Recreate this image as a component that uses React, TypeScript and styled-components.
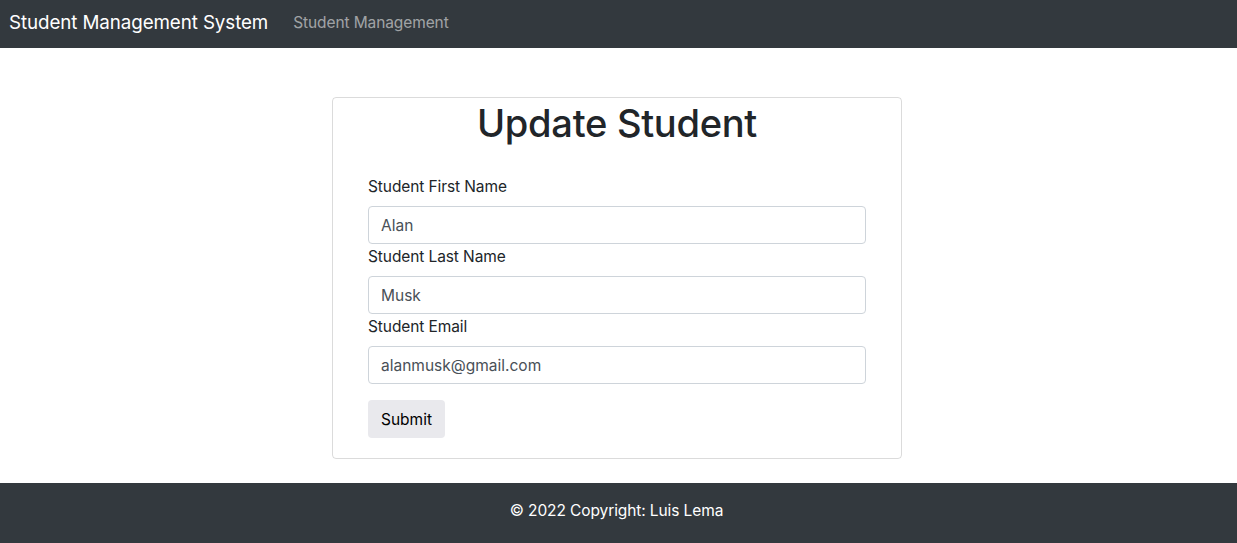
import React from "react";
import styled, { createGlobalStyle } from "styled-components";

const GlobalStyle = createGlobalStyle`
  * { box-sizing: border-box; }
  html, body { margin: 0; padding: 0; }
  body {
    font-family: Inter, "Liberation Sans", Arial, sans-serif;
    font-size: 16px;
    line-height: 1.5;
    color: #212529;
    background: #fff;
  }
`;

const Page = styled.div`
  min-height: 100vh;
  display: flex;
  flex-direction: column;
`;

const NavBar = styled.nav`
  height: 48px;
  background: #33393e;
  display: flex;
  align-items: center;
  padding: 0 9px 2px;
  gap: 25px;
`;

const Brand = styled.a`
  color: #fff;
  font-size: 18.8px;
  line-height: 30px;
  text-decoration: none;
  letter-spacing: -0.1px;
`;

const NavLink = styled.a`
  color: rgba(255, 255, 255, 0.55);
  font-size: 15.5px;
  text-decoration: none;
  letter-spacing: -0.1px;
`;

const Main = styled.main`
  flex: 1;
  padding-top: 49px;
  padding-bottom: 24px;
  display: flex;
  justify-content: center;
`;

const Card = styled.div`
  width: 570px;
  margin-left: -3px;
  border: 1px solid rgba(0, 0, 0, 0.14);
  border-radius: 4px;
  padding: 0 35px 20px;
  align-self: flex-start;
`;

const Title = styled.h1`
  margin: 0 0 27px;
  padding-top: 1px;
  font-size: 38.1px;
  line-height: 48px;
  font-weight: 500;
  text-align: center;
  letter-spacing: -0.3px;
`;

const Form = styled.form`
  display: flex;
  flex-direction: column;
`;

const Label = styled.label`
  display: block;
  margin-bottom: 8px;
  font-size: 15.5px;
  line-height: 24px;
  letter-spacing: -0.1px;
  transform: translateY(1px);
`;

const Input = styled.input`
  display: block;
  width: 100%;
  height: 38px;
  padding: 6px 12px;
  font-family: inherit;
  font-size: 15.5px;
  line-height: 24px;
  color: #495057;
  border: 1px solid #ced4da;
  border-radius: 4px;
  background: #fff;
  outline: none;
`;

const SubmitButton = styled.button`
  align-self: flex-start;
  margin-top: 16px;
  height: 38px;
  padding: 0 13px;
  font-family: inherit;
  font-size: 15.5px;
  color: #000;
  background: #e9e9ed;
  border: none;
  border-radius: 4px;
`;

const Footer = styled.footer`
  background: #33393e;
  color: #fff;
  text-align: center;
  padding: 16px 4px 20px 0;
  font-size: 15.5px;
  line-height: 24px;
  letter-spacing: -0.1px;
`;

const fields = [
  { label: "Student First Name", value: "Alan" },
  { label: "Student Last Name", value: "Musk" },
  { label: "Student Email", value: "alanmusk@gmail.com" },
];

export default function App() {
  return (
    <Page>
      <GlobalStyle />
      <NavBar>
        <Brand href="#">Student Management System</Brand>
        <NavLink href="#">Student Management</NavLink>
      </NavBar>
      <Main>
        <Card>
          <Title>Update Student</Title>
          <Form onSubmit={(e) => e.preventDefault()}>
            {fields.map((f) => (
              <div key={f.label}>
                <Label>{f.label}</Label>
                <Input defaultValue={f.value} />
              </div>
            ))}
            <SubmitButton type="submit">Submit</SubmitButton>
          </Form>
        </Card>
      </Main>
      <Footer>© 2022 Copyright: Luis Lema</Footer>
    </Page>
  );
}
